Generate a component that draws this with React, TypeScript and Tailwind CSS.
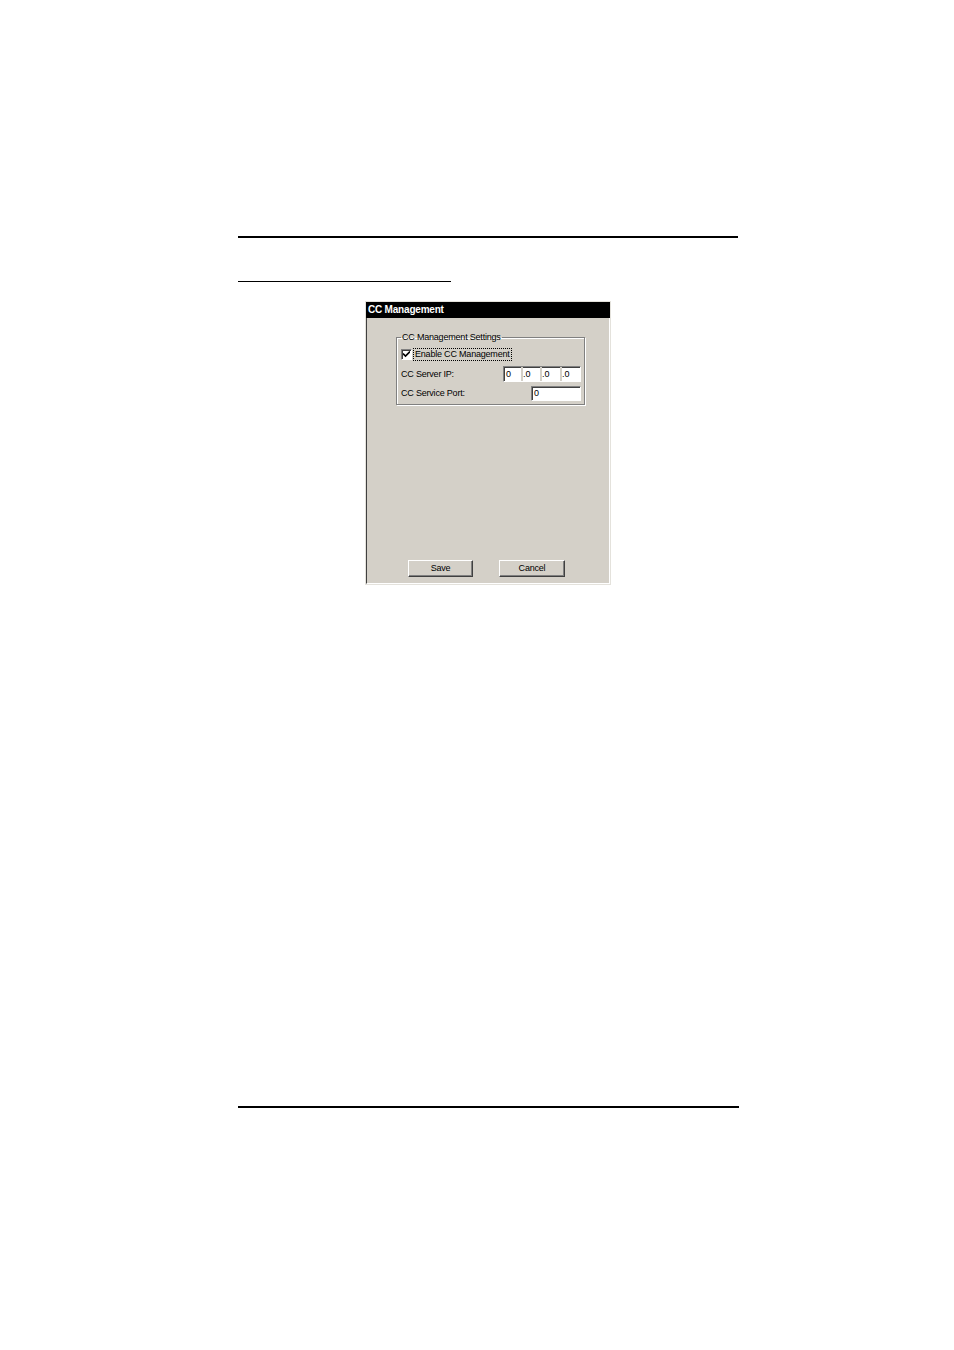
import React from "react";

const font = { fontFamily: '"Liberation Sans", Arial, sans-serif' };

function Sunken({ className = "", children }: { className?: string; children?: React.ReactNode }) {
  return (
    <div
      className={
        "border border-t-[#808080] border-l-[#808080] border-b-white border-r-white shadow-[inset_1px_1px_0_#404040] bg-white " +
        className
      }
    >
      {children}
    </div>
  );
}

function Btn({ label, w }: { label: string; w: string }) {
  return (
    <div
      className={
        "h-[17px] flex items-center justify-center border border-t-white border-l-white border-b-[#404040] border-r-[#404040] shadow-[inset_-1px_-1px_0_#808080] bg-[#d4d0c8] text-[9px] leading-[11px] tracking-[-0.2px] text-black " +
        w
      }
    >
      {label}
    </div>
  );
}

export default function App() {
  return (
    <div className="w-[954px] h-[1350px] bg-white" style={font}>
      <div className="pt-[236px] pl-[238px]">
        <div className="w-[500px] h-[1.5px] bg-black" />
        <div className="mt-[43px] w-[213px] h-[1.5px] bg-black" />
        <div className="mt-[19px] ml-[127px] w-[246px] h-[284px] border border-[#e4e2dc] flex flex-col">
          <div className="h-[16px] bg-black text-white font-bold text-[10px] leading-[16px] tracking-[-0.2px] pl-[2px]">
            CC Management
          </div>
          <div className="flex-1 bg-[#d4d0c8] border-l border-l-[#404040] border-r border-r-white border-b border-b-white flex flex-col">
            <fieldset className="mt-[14px] ml-[29px] w-[189px] border border-[#808080] shadow-[1px_1px_0_#fff,inset_1px_1px_0_#fff] pl-[4px] pr-[3px] pb-[3px]">
              <legend className="px-[1px] text-[9px] leading-[11px] tracking-[-0.2px] text-black">
                CC Management Settings
              </legend>
              <div className="mt-[5px] flex items-center h-[13px]">
                <div className="w-[11px] h-[11px] border border-t-[#808080] border-l-[#808080] border-b-white border-r-white shadow-[inset_1px_1px_0_#404040] bg-white flex items-center justify-center">
                  <svg width="7" height="7" viewBox="0 0 7 7">
                    <path d="M0 2.5 L2.5 5 L7 0.5" stroke="#000" strokeWidth="1.6" fill="none" />
                  </svg>
                </div>
                <div className="ml-[1px] border border-dotted border-black px-[1px] text-[9px] leading-[11px] tracking-[-0.2px] text-black">
                  Enable CC Management
                </div>
              </div>
              <div className="mt-[5px] flex items-center justify-between h-[16px]">
                <span className="text-[9px] leading-[11px] tracking-[-0.2px] text-black">CC Server IP:</span>
                <Sunken className="w-[78px] h-[16px] flex text-[9px] leading-[14px] text-black pl-[2px]">
                  <div className="w-[15px]">0</div>
                  <div className="w-[2px] bg-[#d4d0c8]" />
                  <div className="w-[17px]">.0</div>
                  <div className="w-[2px] bg-[#d4d0c8]" />
                  <div className="w-[18px]">.0</div>
                  <div className="w-[2px] bg-[#d4d0c8]" />
                  <div className="flex-1">.0</div>
                </Sunken>
              </div>
              <div className="mt-[4px] flex items-center justify-between h-[15px]">
                <span className="text-[9px] leading-[11px] tracking-[-0.2px] text-black">CC Service Port:</span>
                <Sunken className="w-[50px] h-[15px] text-[9px] leading-[13px] text-black pl-[2px]">0</Sunken>
              </div>
            </fieldset>
            <div className="mt-auto pb-[6px] pl-[41px] flex gap-[26px]">
              <Btn label="Save" w="w-[65px]" />
              <Btn label="Cancel" w="w-[66px]" />
            </div>
          </div>
        </div>
        <div className="mt-[521px] w-[501px] h-[1.5px] bg-black" />
      </div>
    </div>
  );
}
